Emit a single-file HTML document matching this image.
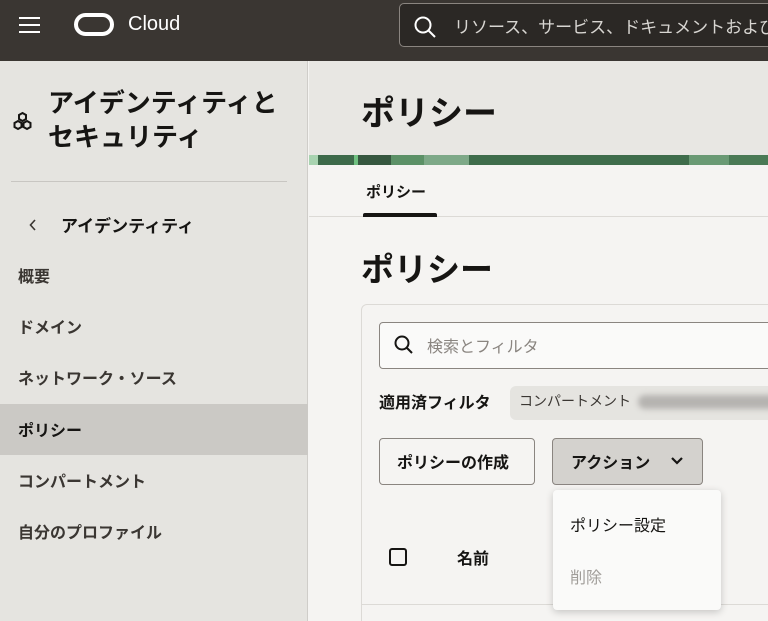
<!DOCTYPE html>
<html><head><meta charset="utf-8"><style>
*{box-sizing:border-box;margin:0;padding:0}
html,body{width:768px;height:621px;overflow:hidden}
body{position:relative;background:#f5f4f2;font-family:"Liberation Sans","Noto Sans CJK JP",sans-serif;color:#161513}
.abs{position:absolute}
.hdr{left:0;top:0;width:768px;height:61px;background:#3a3632}
.side{left:0;top:61px;width:308px;height:560px;background:#e5e4e0;border-right:1px solid #cfcdc9}
.nav{position:absolute;left:18px;font-size:16px;font-weight:bold;color:#3a3632}
.b{font-weight:bold}
</style></head><body>
<div class="abs hdr">
  <div class="abs" style="left:19px;top:17px;width:21px;height:2px;background:#fff;box-shadow:0 7px 0 #fff,0 14px 0 #fff"></div>
  <div class="abs" style="left:74px;top:13px;width:40px;height:23px;border:4px solid #fff;border-radius:12px"></div>
  <div class="abs" style="left:128px;top:13px;color:#fff;font-size:20px">Cloud</div>
  <div class="abs" style="left:399px;top:3px;width:380px;height:44px;border:1px solid #8a8580;border-radius:5px;background:#2b2825"></div>
  <svg class="abs" style="left:413px;top:15px" width="24" height="24" viewBox="0 0 24 24"><circle cx="10" cy="10" r="7.5" fill="none" stroke="#fff" stroke-width="2"/><path d="M15.5 15.5L22 22" stroke="#fff" stroke-width="2"/></svg>
  <div class="abs" style="left:454px;top:13px;color:#d8d6d2;font-size:17px;white-space:nowrap">リソース、サービス、ドキュメントおよび</div>
</div>
<div class="abs side">
  <svg class="abs" style="left:11px;top:50px" width="23" height="22" viewBox="0 0 23 22"><g fill="none" stroke="#161513" stroke-width="2"><polygon points="11.5,2 15,4 15,8 11.5,10 8,8 8,4"/><polygon points="7,10 10.5,12 10.5,16 7,18 3.5,16 3.5,12"/><polygon points="16,10 19.5,12 19.5,16 16,18 12.5,16 12.5,12"/></g></svg>
  <div class="abs b" style="left:48px;top:25px;font-size:26px;line-height:34px">アイデンティティと<br>セキュリティ</div>
  <div class="abs" style="left:11px;top:120px;width:276px;height:1px;background:#c8c6c2"></div>
  <svg class="abs" style="left:28px;top:157px" width="10" height="14" viewBox="0 0 10 14"><path d="M7 2L2.5 7L7 12" fill="none" stroke="#3a3632" stroke-width="1.6"/></svg>
  <div class="abs b" style="left:61px;top:151px;font-size:17px">アイデンティティ</div>
  <div class="nav" style="top:202px">概要</div>
  <div class="nav" style="top:253px">ドメイン</div>
  <div class="nav" style="top:304px">ネットワーク・ソース</div>
  <div class="abs" style="left:0;top:343px;width:308px;height:51px;background:#cbc9c5"></div>
  <div class="nav" style="top:356px;color:#161513">ポリシー</div>
  <div class="nav" style="top:407px">コンパートメント</div>
  <div class="nav" style="top:458px">自分のプロファイル</div>
</div>
<div class="abs" style="left:309px;top:61px;width:459px;height:94px;background:#e8e7e3"></div>
<div class="abs b" style="left:361px;top:86px;font-size:34px">ポリシー</div>
<div class="abs" style="left:309px;top:155px;width:459px;height:10px;background:linear-gradient(90deg,#a8d3b0 0,#a8d3b0 9px,#3d6a4a 9px,#3d6a4a 45px,#6fc080 45px,#6fc080 49px,#36573f 49px,#36573f 82px,#5c9167 82px,#5c9167 115px,#7ea988 115px,#7ea988 160px,#3f6d4b 160px,#3f6d4b 380px,#6a9a74 380px,#6a9a74 420px,#4a7a55 420px)"></div>
<div class="abs" style="left:309px;top:165px;width:459px;height:52px;background:#f5f4f2;border-bottom:1px solid #dcdad6"></div>
<div class="abs b" style="left:366px;top:181px;font-size:15px">ポリシー</div>
<div class="abs" style="left:363px;top:213px;width:74px;height:4px;background:#161513;border-radius:2px 2px 0 0"></div>
<div class="abs b" style="left:361px;top:243px;font-size:33px">ポリシー</div>
<div class="abs" style="left:361px;top:304px;width:420px;height:330px;border:1px solid #dcdad6;border-radius:6px;background:#f5f4f2"></div>
<div class="abs" style="left:379px;top:322px;width:400px;height:47px;border:1px solid #8a8580;border-radius:4px;background:#fafaf9"></div>
<svg class="abs" style="left:393px;top:334px" width="22" height="22" viewBox="0 0 22 22"><circle cx="9" cy="9" r="6.5" fill="none" stroke="#161513" stroke-width="2"/><path d="M13.5 13.5L19 19" stroke="#161513" stroke-width="2"/></svg>
<div class="abs" style="left:427px;top:333px;font-size:16px;color:#8a8580">検索とフィルタ</div>
<div class="abs b" style="left:379px;top:389px;font-size:16px">適用済フィルタ</div>
<div class="abs" style="left:510px;top:386px;width:270px;height:34px;background:#e5e4e0;border-radius:6px"></div>
<div class="abs" style="left:519px;top:391px;font-size:14px;color:#3a3632">コンパートメント</div>
<div class="abs" style="left:638px;top:395px;width:140px;height:14px;background:#b5b3b0;border-radius:7px;filter:blur(3px)"></div>
<div class="abs" style="left:379px;top:438px;width:156px;height:47px;border:1px solid #8a8580;border-radius:4px;background:#f5f4f2"></div>
<div class="abs b" style="left:397px;top:449px;font-size:16px">ポリシーの作成</div>
<div class="abs" style="left:552px;top:438px;width:151px;height:47px;border:1px solid #8a8580;border-radius:4px;background:#d4d2ce"></div>
<div class="abs b" style="left:571px;top:449px;font-size:16px">アクション</div>
<svg class="abs" style="left:670px;top:456px" width="14" height="10" viewBox="0 0 14 10"><path d="M2 2L7 7L12 2" fill="none" stroke="#161513" stroke-width="2.2"/></svg>
<svg class="abs" style="left:389px;top:548px" width="18" height="18" viewBox="0 0 18 18"><rect x="1" y="1" width="16" height="16" rx="2" fill="none" stroke="#161513" stroke-width="2"/></svg>
<div class="abs b" style="left:457px;top:545px;font-size:16px">名前</div>
<div class="abs" style="left:362px;top:604px;width:406px;height:1px;background:#dcdad6"></div>
<div class="abs" style="left:553px;top:490px;width:168px;height:120px;background:#fafaf9;border-radius:4px;box-shadow:0 2px 8px rgba(0,0,0,.2)"></div>
<div class="abs" style="left:570px;top:512px;font-size:16px">ポリシー設定</div>
<div class="abs" style="left:570px;top:564px;font-size:16px;color:#a09d99">削除</div>
</body></html>
